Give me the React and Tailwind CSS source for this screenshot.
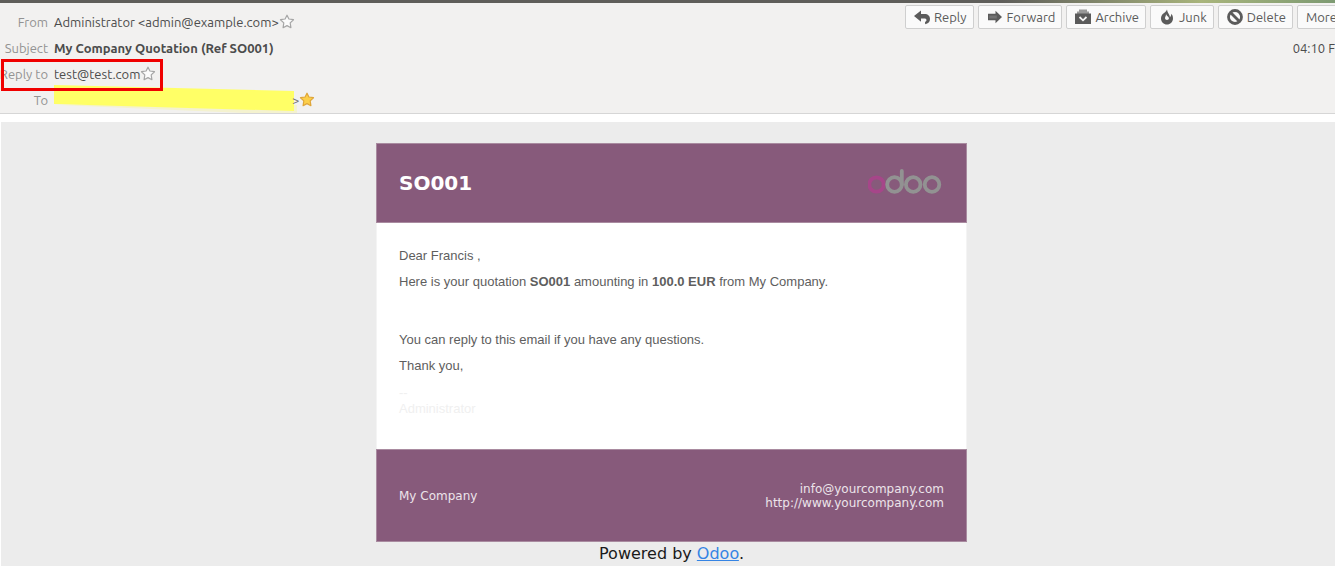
function ReplyIcon() {
  return (
    <svg className="h-4 w-4 shrink-0" viewBox="0 0 16 16" fill="#5b5b5b" aria-hidden="true">
      <path d="M0 7 7 1.500V5h3.500C14 5 16 7 16 10c0 2.800-1.800 4.600-4.800 5.200L11 13c1.200-.5 1.500-1 1.500-1.900 0-1.200-.8-1.700-2.300-1.700H7v3.400z" />
    </svg>
  );
}

function ForwardIcon() {
  return (
    <svg className="h-4 w-4 shrink-0" viewBox="0 0 16 16" fill="#5b5b5b" aria-hidden="true">
      <path d="M1 4.700h7.500V1.800L15 8l-6.500 6.200v-2.900H1z" />
      <path d="M2.300 6.500h7.500v3H2.300z" fill="#737373" />
    </svg>
  );
}

function ArchiveIcon() {
  return (
    <svg className="h-4 w-4 shrink-0" viewBox="0 0 16 16" aria-hidden="true">
      <path d="M4 .500h8V2.500h2v3H2v-3h2z" fill="#999" />
      <path d="M0 4.500h16V15H0z" fill="#5b5b5b" />
      <path d="m4.500 8 3.500 3.300L11.500 8" fill="none" stroke="#f5f5f5" strokeWidth="1.800" />
    </svg>
  );
}

function JunkIcon() {
  return (
    <svg className="h-4 w-4 shrink-0" viewBox="0 0 16 16" fill="#5b5b5b" aria-hidden="true">
      <path
        d="M8 .500C7.300 3 5 3.700 3.500 5.200 2.500 6.300 2 7.800 2 9.500c0 3.400 2.700 6 6 6s6-2.600 6-6c0-1.900-.6-3.500-1.700-4.700 0 1.600-.5 2.700-1.300 3.400C10.700 5.500 8.300 3.600 8 .500zM7 5c.3 1.800 2.900 2.500 2.900 4.300 0 1.100-.8 1.700-1.900 1.700s-2-.7-2-1.900C6 7.700 7.200 7 7 5z"
        fillRule="evenodd"
      />
    </svg>
  );
}

function DeleteIcon() {
  return (
    <svg className="h-4 w-4 shrink-0" viewBox="0 0 16 16" fill="none" stroke="#5b5b5b" strokeWidth="2.800" aria-hidden="true">
      <circle cx="8" cy="8" r="6.500" />
      <path d="m3.500 3.500 9 9" />
    </svg>
  );
}

function Star({ filled }) {
  return (
    <svg className="h-4 w-4 shrink-0" viewBox="0 0 16 16" aria-hidden="true">
      <path
        d="m8 1.200 1.900 3.800 4.600.7-3.300 3.200.7 4.800L8 11.600l-3.900 2.100.7-4.800L1.500 5.700l4.600-.7z"
        fill={filled ? "#fccf4a" : "#fbfbfb"}
        stroke={filled ? "#dfa63a" : "#a6a6a6"}
        strokeWidth="1.200"
        strokeLinejoin="round"
      />
    </svg>
  );
}

function ToolButton({ icon, children }) {
  return (
    <button
      type="button"
      className={`flex h-6 shrink-0 items-center gap-1 rounded-xs border border-[#cfcfcf] bg-[#fafafa] text-[13px] leading-4 text-[#5b5b5b] ${
        icon ? "pr-[6px] pl-2" : "px-2"
      }`}
    >
      {icon}
      {children}
    </button>
  );
}

function HeaderRow({ label, children }) {
  return (
    <div className="flex h-[26px] items-center gap-[6px]">
      <dt className="flex w-12 shrink-0 justify-end whitespace-nowrap text-[#939393]">{label}</dt>
      <dd className="flex items-center whitespace-nowrap">{children}</dd>
    </div>
  );
}

function MessageHeader() {
  return (
    <header className="relative border-b border-[#d6d6d6] bg-[#f2f1f0] font-['Ubuntu','Noto_Sans',sans-serif] text-[13px] leading-4 text-[#4c4c4c]">
      <dl className="pt-[6px]">
        <HeaderRow label="From">
          Administrator &lt;admin@example.com&gt;
          <Star />
        </HeaderRow>
        <HeaderRow label="Subject">
          <span className="font-bold">My Company Quotation (Ref SO001)</span>
        </HeaderRow>
        <HeaderRow label="Reply to">
          test@test.com
          <Star />
        </HeaderRow>
        <HeaderRow label="To">
          <svg className="h-[26px] w-[238px] overflow-visible" viewBox="0 0 238 26" aria-hidden="true">
            <path d="M5 18h238v8H190z" fill="#f4f2cf" />
            <path d="M0-2 240 4v20L0 17z" fill="#ffff66" />
          </svg>
          <span className="text-[#777]">&gt;</span>
          <Star filled />
        </HeaderRow>
      </dl>
      <div className="absolute top-14 left-px h-8 w-[162px] border-3 border-[#f00000]" />
      <div className="absolute top-0 right-0 left-[905px] overflow-hidden">
        <div className="flex gap-1 pt-[2px]">
          <ToolButton icon={<ReplyIcon />}>Reply</ToolButton>
          <ToolButton icon={<ForwardIcon />}>Forward</ToolButton>
          <ToolButton icon={<ArchiveIcon />}>Archive</ToolButton>
          <ToolButton icon={<JunkIcon />}>Junk</ToolButton>
          <ToolButton icon={<DeleteIcon />}>Delete</ToolButton>
          <ToolButton>More</ToolButton>
        </div>
        <p className="pt-[11px] text-right">04:10 F</p>
      </div>
    </header>
  );
}

function OdooLogo() {
  return (
    <svg className="h-8 w-[76px]" viewBox="0 0 76 32" fill="none" stroke="#929292" strokeWidth="3.800" role="img" aria-label="odoo">
      <circle cx="8.500" cy="17.500" r="7.200" stroke="#a64689" />
      <circle cx="26.500" cy="17.500" r="7.300" />
      <path d="M33.800 18V4" strokeLinecap="round" />
      <circle cx="45.200" cy="17.500" r="7.300" />
      <circle cx="64" cy="17.500" r="7.300" />
    </svg>
  );
}

function Message() {
  return (
    <main className="ml-px flex min-h-screen flex-col items-center bg-[#ececec] pt-[21px] pl-[7px] font-['DejaVu_Sans',sans-serif]">
      <article className="w-[591px] max-w-full">
        <div className="flex h-20 items-center justify-between border border-[#a98ba0] bg-[#875a7b] px-[22px]">
          <h1 className="text-xl font-bold text-white">SO001</h1>
          <OdooLogo />
        </div>
        <div className="border-x border-[#f4f4f4] bg-white px-[22px] pt-5 pb-8 font-['Liberation_Sans',sans-serif] text-[13px] leading-[26px] text-[#5e5e5e]">
          <p>Dear Francis ,</p>
          <p>
            Here is your quotation <b>SO001</b> amounting in <b>100.0 EUR</b> from My Company.
          </p>
          <p className="mt-8">You can reply to this email if you have any questions.</p>
          <p>Thank you,</p>
          <p className="mt-[6px] leading-4 text-[#f0f0f0]">
            --
            <br />
            Administrator
          </p>
        </div>
        <footer className="flex h-[93px] items-center justify-between border border-[#a98ba0] bg-[#875a7b] px-[22px] text-xs leading-[14px] text-[#ece4ea]">
          <p>My Company</p>
          <p className="text-right">
            info@yourcompany.com
            <br />
            http://www.yourcompany.com
          </p>
        </footer>
      </article>
      <p className="text-base leading-6 text-[#1a1a1a]">
        Powered by <a href="#odoo" className="text-[#3584e4] underline">Odoo</a>.
      </p>
    </main>
  );
}

export default function App() {
  return (
    <div className="h-screen overflow-hidden bg-white">
      <div className="flex h-[3px] bg-[#5f5e5a]">
        <div className="ml-auto w-1/4 bg-linear-to-r from-[#5f5e5a] via-[#a9b57c] via-60% to-[#7d9a72]" />
      </div>
      <MessageHeader />
      <div className="h-2" />
      <Message />
    </div>
  );
}
